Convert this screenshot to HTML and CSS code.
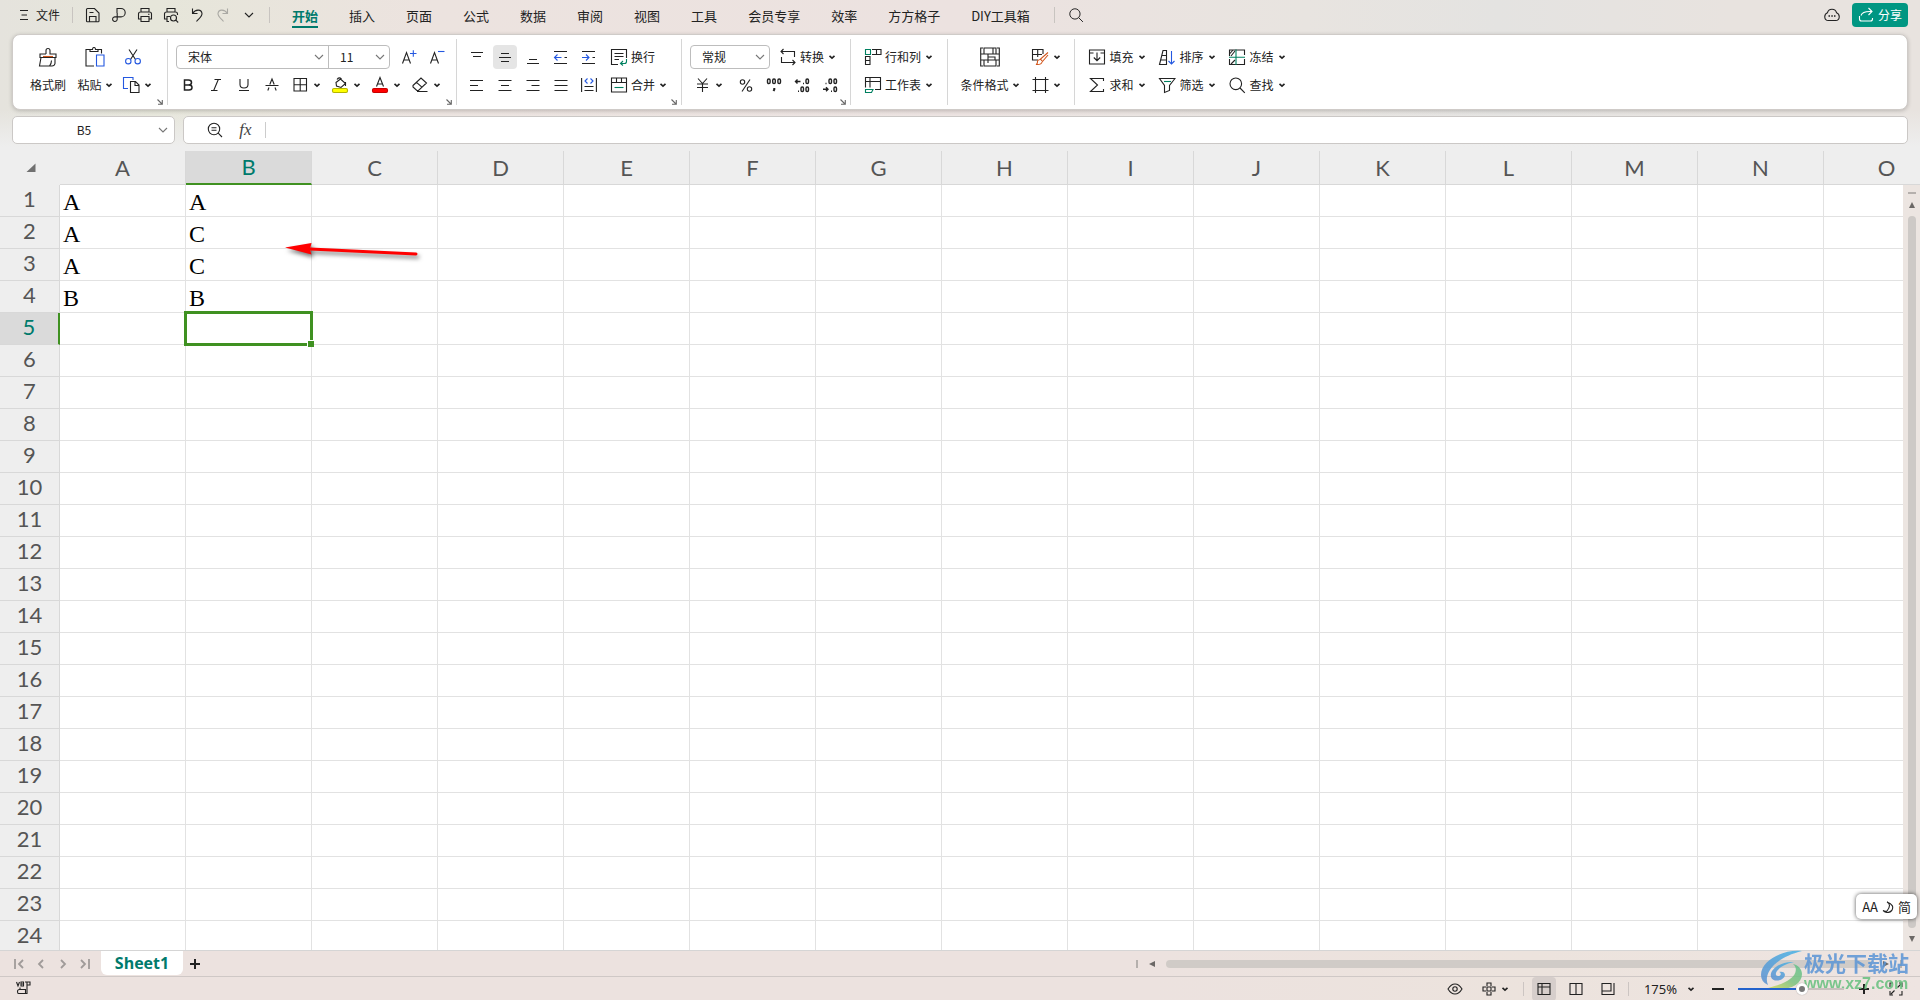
FILE: index.html
```html
<!DOCTYPE html>
<html lang="zh-CN">
<head>
<meta charset="utf-8">
<title>Sheet1</title>
<link rel="stylesheet" href="styles.css">
</head>
<body>
<svg class="sprite" aria-hidden="true">
  <symbol id="chev" viewBox="0 0 8 8"><path d="M1.5 2.8 4 5.2 6.5 2.8" stroke-width="1.6"/></symbol>
  <symbol id="chev-lg" viewBox="0 0 12 12"><path d="M2 4l4 4 4-4"/></symbol>
  <symbol id="launch" viewBox="0 0 6 6"><path d="M.5.5l4.5 4.5M5.3 1v4.3H1"/></symbol>
  <symbol id="search" viewBox="0 0 18 18"><circle cx="7.8" cy="7.8" r="5.8"/><path d="M12 12l4.8 4.8"/></symbol>
</svg>

<header class="titlebar">
  <button class="file-btn"><svg class="i10" viewBox="0 0 10 12"><path d="M1 1.500h8M2.500 6h5.500M1 10.500h8"/></svg>文件</button>
  <span class="bar-sep"></span>
  <div class="quick">
    <button aria-label="保存"><svg class="i16" viewBox="0 0 16 16"><path d="M1.500 14V2.500q0-1 1-1h7l4.500 4.500V14q0 .8-.8.8H2.300q-.8 0-.8-.8zM4.500 14.500V9.500h6.500v5M4.500 5.500h4"/></svg></button>
    <button aria-label="导出"><svg class="i16" viewBox="0 0 16 16"><path d="M6 6V1.500h4a4.200 4.200 0 0 1 0 8.400H4.200a2.300 2.300 0 1 0 2 2.300V6"/></svg></button>
    <button aria-label="打印"><svg class="i16" viewBox="0 0 16 16"><path d="M4 5V1.500h8V5M4 12H1.500V7q0-2 2-2h9q2 0 2 2v5H12M4 9.500h8v5H4zM11 7.300h1.500"/></svg></button>
    <button aria-label="打印预览"><svg class="i16" viewBox="0 0 16 16"><path d="M4 5V1.500h8V5M4 12H1.500V7q0-2 2-2h9q2 0 2 2v1M6 14.500H4v-5h3"/><circle cx="10.500" cy="11" r="3"/><path d="M12.800 13.200l2.400 2.300"/></svg></button>
    <button aria-label="撤销"><svg class="i16" viewBox="0 0 16 16"><path d="M3.500 1.500v5h5M3.800 6.200C6 2.500 12.500 1.500 13 6.500c.2 3-3 5-5.500 8"/></svg></button>
    <button class="dim" aria-label="恢复"><svg class="i16" viewBox="0 0 16 16"><path d="M12.500 1.500v5h-5M12.200 6.200C10 2.500 3.500 1.500 3 6.500c-.2 3 3 5 5.500 8"/></svg></button>
    <button aria-label="更多"><svg class="i12" viewBox="0 0 12 12"><path d="M2 4l4 4 4-4"/></svg></button>
  </div>
  <span class="bar-sep"></span>
  <nav class="tabs">
    <a href="#" class="on">开始</a><a href="#">插入</a><a href="#">页面</a><a href="#">公式</a><a href="#">数据</a><a href="#">审阅</a><a href="#">视图</a><a href="#">工具</a><a href="#">会员专享</a><a href="#">效率</a><a href="#">方方格子</a><a href="#">DIY工具箱</a>
  </nav>
  <span class="bar-sep"></span>
  <button class="find" aria-label="搜索"><svg class="i16"><use href="#search"/></svg></button>
  <div class="account">
    <button aria-label="云"><svg class="i16" viewBox="0 0 16 16"><path d="M3.500 5.700C4.500 1 11.500 1 12.500 5.700c4 1.600 3.500 7.800-.8 7.800H4.300C0 13.500-.5 7.300 3.500 5.700z"/><path d="M4.500 9h1.500M7.300 9h1.500M10 9h1.500" stroke-width="1.600"/></svg></button>
    <button class="share"><svg class="i16" viewBox="0 0 16 16"><path d="M1.500 9v3q0 2 2 2h9q2 0 2-2v-1M3 8.500C4 5 8 4.200 13.500 4.500M10.500 1l3.500 3.500L10.500 8"/></svg>分享</button>
  </div>
</header>

<section class="ribbon" aria-label="开始">
  <div class="group g-clipboard">
    <div class="group-body lead">
      <button class="big w46"><svg class="i20" viewBox="0 0 20 20"><path d="M8 7V3.500a2 2 0 0 1 4 0V7h6v3.500H2V7h6M3 10.500 1.500 19H14q2.500 0 3-2.500v-6M13.500 13.500q0 3-2 5.500"/><path class="orange" d="M5 9.500h10"/></svg><span>格式刷</span></button>
      <button class="big w48"><svg class="i20" viewBox="0 0 20 20"><path d="M4.500 2.500H1v16.500h8M13 2.500h3.500v4M5 4.500V2.500h2.500q0-2 1.500-2t1.500 2H13v2z"/><path d="M11.500 19V8h7.500v11z" class="blue"/></svg><span>粘贴<svg class="chev"><use href="#chev"/></svg></span></button>
      <div class="rows">
        <div class="row"><button class="cell" aria-label="剪切"><svg class="i16" viewBox="0 0 16 16"><path d="M4 .5l6.500 10M12 .5l-6.500 10"/><g class="blue"><circle cx="3.300" cy="12.200" r="2.700"/><circle cx="12.700" cy="12.200" r="2.700"/></g></svg></button></div>
        <div class="row"><button class="split w36" aria-label="复制"><svg class="i18" viewBox="0 0 18 18"><path class="blue" d="M6 12.500H1.500v-11H11V4"/><path d="M8.500 5.500h5l3.500 3.500v7.500H8.500zM13 5.500V9.500h4"/></svg><svg class="chev"><use href="#chev"/></svg></button></div>
      </div>
    </div>
    <button class="launcher" aria-label="剪贴板设置"><svg><use href="#launch"/></svg></button>
  </div>

  <div class="group g-font">
    <div class="group-body"><div class="rows">
      <div class="row">
        <div class="combo-pair">
          <span class="combo w152"><select aria-label="字体"><option>宋体</option></select><svg class="i12"><use href="#chev-lg"/></svg></span>
          <span class="combo w62"><select aria-label="字号"><option>11</option></select><svg class="i12"><use href="#chev-lg"/></svg></span>
        </div>
        <button class="cell" aria-label="增大字号"><svg class="i16" viewBox="0 0 16 16"><path d="M1.500 14.500 5.500 3.500l4 11M2.800 11h5.400"/><path class="blue" d="M9 4.500h6.500M12.300 1.200v6.500"/></svg></button>
        <button class="cell" aria-label="减小字号"><svg class="i16" viewBox="0 0 16 16"><path d="M1.500 14.500 5.500 3.500l4 11M2.800 11h5.400"/><path class="blue" d="M9 2.500h6.500"/></svg></button>
      </div>
      <div class="row">
        <button class="cell" aria-label="加粗"><svg class="i16" viewBox="0 0 16 16"><path d="M4.500 3h4q3 0 3 2.500T8.500 8h-4zM4.500 8H9q3 0 3 2.500T9 13H4.500z" stroke-width="1.500"/></svg></button>
        <button class="cell" aria-label="倾斜"><svg class="i16" viewBox="0 0 16 16"><path d="M6.500 2.500H13M3 13.500h6.500M10.300 2.500l-4.600 11"/></svg></button>
        <button class="cell" aria-label="下划线"><svg class="i16" viewBox="0 0 16 16"><path d="M4 2v5.500q0 3.500 4 3.500t4-3.500V2M3 13.500h10"/></svg></button>
        <button class="cell" aria-label="删除线"><svg class="i16" viewBox="0 0 16 16"><path d="M1.500 8.500h13M5.800 7.500 8 2l2.200 5.500M5 10.500l-1.200 3M11 10.500l1.200 3"/></svg></button>
        <button class="split" aria-label="边框"><svg class="i18" viewBox="0 0 18 18"><path d="M3 2.500h12.500v12.500H3zM3 8.700h12.500M9.200 2.500v12.500"/></svg><svg class="chev"><use href="#chev"/></svg></button>
        <button class="split" aria-label="填充颜色"><svg class="i18" viewBox="0 0 18 18"><path d="M5 6.500 9.500 3l5 4.500-4.500 4-4.500-1.500zM6 3.500Q8 .5 10.500 3M14.500 6v4"/><rect x="1.500" y="12.500" width="15" height="4" rx="1.500" fill="#ff0" stroke="#b5b500"/></svg><svg class="chev"><use href="#chev"/></svg></button>
        <button class="split" aria-label="字体颜色"><svg class="i18" viewBox="0 0 18 18"><path d="M5.500 10.500 9 1.500l3.500 9M6.500 8h5"/><rect x="1.500" y="12.500" width="15" height="4" rx="1.500" fill="red" stroke="#c80000"/></svg><svg class="chev"><use href="#chev"/></svg></button>
        <button class="split" aria-label="清除"><svg class="i18" viewBox="0 0 18 18"><path d="M2 9.500 10 2l5.500 5-8 7.500H5.800L2 11zM5.500 6.300l5.700 5M6 15.500h10.500"/></svg><svg class="chev"><use href="#chev"/></svg></button>
      </div>
    </div></div>
    <button class="launcher" aria-label="字体设置"><svg><use href="#launch"/></svg></button>
  </div>

  <div class="group g-align">
    <div class="group-body"><div class="rows">
      <div class="row">
        <button class="cell" aria-label="顶端对齐"><svg class="i16" viewBox="0 0 16 16"><path d="M2 3.500h12M4 7.500h8"/></svg></button>
        <button class="cell on" aria-label="垂直居中"><svg class="i16" viewBox="0 0 16 16"><path d="M4 4.500h8M2 8.500h12M4 12.500h8"/></svg></button>
        <button class="cell" aria-label="底端对齐"><svg class="i16" viewBox="0 0 16 16"><path d="M4 10.500h8M2 14.500h12"/></svg></button>
        <button class="cell" aria-label="减少缩进"><svg class="i16" viewBox="0 0 16 16"><path d="M1 2.500h13M1 14.500h13M11.500 8.500H14"/><path class="blue" d="M8.500 8.500H2M4.500 5.500l-3 3 3 3"/></svg></button>
        <button class="cell" aria-label="增加缩进"><svg class="i16" viewBox="0 0 16 16"><path d="M1 2.500h13M1 14.500h13M11.500 8.500H14"/><path class="blue" d="M1 8.500h6.500M5 5.500l3 3-3 3"/></svg></button>
        <button class="tool"><svg class="i18" viewBox="0 0 18 18"><path d="M8 16.500H1.500v-15h15V10M4.500 5.500h9M4.500 8.500h9M4.500 11.500H9"/><path class="green" d="M16.500 11v2.500q0 2-2 2H11M13 13l-2.500 2.500L13 17.500"/></svg>换行</button>
      </div>
      <div class="row">
        <button class="cell" aria-label="左对齐"><svg class="i16" viewBox="0 0 16 16"><path d="M1 3.500h13M1 8.500h8M1 13.500h13"/></svg></button>
        <button class="cell" aria-label="水平居中"><svg class="i16" viewBox="0 0 16 16"><path d="M1.500 3.500h13M4 8.500h8M1.500 13.500h13"/></svg></button>
        <button class="cell" aria-label="右对齐"><svg class="i16" viewBox="0 0 16 16"><path d="M1.500 3.500h13M6.500 8.500h8M1.500 13.500h13"/></svg></button>
        <button class="cell" aria-label="两端对齐"><svg class="i16" viewBox="0 0 16 16"><path d="M1.500 3.500h13M1.500 8.500h13M1.500 13.500h13"/></svg></button>
        <button class="cell" aria-label="分散对齐"><svg class="i16" viewBox="0 0 16 16"><path d="M.6 1v14M15.400 1v14M3.500 9.500h9M3.500 13.500h9"/><path class="blue" d="M6.500 1.500 4 4l2.500 2.500M9.500 1.500 12 4 9.500 6.500"/></svg></button>
        <button class="tool"><svg class="i18" viewBox="0 0 18 18"><path d="M1.500 2h15v14h-15zM1.500 6.500h15M6.500 2v4.500M11.500 2v4.500"/><path class="green" d="M4.500 11.500h9"/></svg>合并<svg class="chev"><use href="#chev"/></svg></button>
      </div>
    </div></div>
    <button class="launcher" aria-label="对齐设置"><svg><use href="#launch"/></svg></button>
  </div>

  <div class="group g-number">
    <div class="group-body"><div class="rows">
      <div class="row">
        <div class="combo-pair"><span class="combo w80"><select aria-label="数字格式"><option>常规</option></select><svg class="i12"><use href="#chev-lg"/></svg></span></div>
        <button class="tool flush"><svg class="i18" viewBox="0 0 18 18"><path d="M2.500 9v5.500H16M4.500 1 2 3.500 4.500 6M2 3.500h13.500V9M13.500 12l2.500 2.500-2.500 2.500"/></svg>转换<svg class="chev"><use href="#chev"/></svg></button>
      </div>
      <div class="row">
        <button class="split" aria-label="货币"><svg class="i18" viewBox="0 0 18 18"><path d="M5 2.500 9.500 7.500 14 2.500M9.500 7.500v8.500M4 8h11M4 11.500h11"/></svg><svg class="chev"><use href="#chev"/></svg></button>
        <span class="spacer"></span>
        <button class="cell" aria-label="百分比"><svg class="i16" viewBox="0 0 16 16"><circle cx="4.500" cy="5" r="2.200"/><circle cx="11.500" cy="12" r="2.200"/><path d="M12 2.500 4 14.500"/></svg></button>
        <button class="cell" aria-label="千位分隔"><svg class="i16" viewBox="0 0 16 16"><g stroke-width="1.400"><rect x="1.500" y="2" width="2.600" height="4.500" rx="1.200"/><rect x="6.700" y="2" width="2.600" height="4.500" rx="1.200"/><rect x="11.900" y="2" width="2.600" height="4.500" rx="1.200"/><path d="M8.300 11v1.500L7.500 14" stroke-width="2"/></g></svg></button>
        <button class="cell" aria-label="增加小数位"><svg class="i16" viewBox="0 0 16 16"><g stroke-width="1.400"><path d="M6.500 4.500h-5M3.500 2.500l-2 2 2 2M9 6.500h1M4 14.200h1"/><rect x="12" y="2" width="2.500" height="4.500" rx="1.200"/><rect x="7" y="10" width="2.500" height="4.500" rx="1.200"/><rect x="12" y="10" width="2.500" height="4.500" rx="1.200"/></g></svg></button>
        <button class="cell" aria-label="减少小数位"><svg class="i16" viewBox="0 0 16 16"><g stroke-width="1.400"><path d="M1 12.200h5M4 10.200l2 2-2 2M3.500 6.500h1M9 14.200h1"/><rect x="7" y="2" width="2.500" height="4.500" rx="1.200"/><rect x="12" y="2" width="2.500" height="4.500" rx="1.200"/><rect x="12" y="10" width="2.500" height="4.500" rx="1.200"/></g></svg></button>
      </div>
    </div></div>
    <button class="launcher" aria-label="数字设置"><svg><use href="#launch"/></svg></button>
  </div>

  <div class="group g-cells">
    <div class="group-body"><div class="rows">
      <div class="row"><button class="tool"><svg class="i18" viewBox="0 0 18 18"><path d="M8 1.500h9v5H8M12.500 1.500v5M1.500 8.500h4.500v8H1.500zM1.500 12.500H6"/><path class="green" d="M1.500 1.500h5v5h-5z"/></svg>行和列<svg class="chev"><use href="#chev"/></svg></button></div>
      <div class="row"><button class="tool"><svg class="i18" viewBox="0 0 18 18"><path d="M1.500 11.500V1.500h15v12H11M1.500 5.500h15M6 1.500v10"/><path class="green" d="M1.500 13.500H9l-1.500 3h-6z"/></svg>工作表<svg class="chev"><use href="#chev"/></svg></button></div>
    </div></div>
  </div>

  <div class="group g-style">
    <div class="group-body">
      <button class="big w72"><svg class="i20" viewBox="0 0 20 20"><path d="M3 1H.7v18H3M17 1h2.300v18H17M4 1h12v6H4zM.7 7h18.600M.7 13h18.600M4 13v6h12v-6M8 7v6M13 1v6M8 10h7v3M8 16V13"/></svg><span>条件格式<svg class="chev"><use href="#chev"/></svg></span></button>
      <div class="rows">
        <div class="row"><button class="split" aria-label="表格样式"><svg class="i18" viewBox="0 0 18 18"><path d="M7 12H1.500V1.500H12V6M1.500 6.500H11M6.700 1.500V9"/><path class="orange" d="M17 4.500 9.500 11l2 2.500L17 7M9.300 11.500Q6 12 6.500 14q0 2-1.500 2.500 5.500.5 6-2.500"/></svg><svg class="chev"><use href="#chev"/></svg></button></div>
        <div class="row"><button class="split" aria-label="单元格"><svg class="i18" viewBox="0 0 18 18"><path d="M4.500 1v16M14.500 1v16M1.500 3.500h16M1.500 14.500h16"/></svg><svg class="chev"><use href="#chev"/></svg></button></div>
      </div>
    </div>
  </div>

  <div class="group last">
    <div class="group-body"><div class="rows">
      <div class="row">
        <button class="tool w70"><svg class="i18" viewBox="0 0 18 18"><path d="M1.500 5V2h15v3M1.500 5v11h15V5M1.500 5h4M12.500 5h4M9 4.500v8M5.800 9.500 9 12.700l3.200-3.200"/></svg>填充<svg class="chev"><use href="#chev"/></svg></button>
        <button class="tool w70"><svg class="i18" viewBox="0 0 18 18"><path d="M1.500 16.500 5 2.500h3.500v14zM4 7.500h4.500M2.700 12h5.800"/><path class="blue" d="M13.500 3v13M10.500 13l3 3 3-3"/></svg>排序<svg class="chev"><use href="#chev"/></svg></button>
        <button class="tool w70"><svg class="i18" viewBox="0 0 18 18"><path d="M1.500 8V2h15v5M1.500 11v5.500h15V11M5 2l-3 3.500M7 3 3 8M7 12l-4 4M12 2h4.500"/><path class="green" d="M8 1.500v15.500M1 9.300h16"/></svg>冻结<svg class="chev"><use href="#chev"/></svg></button>
      </div>
      <div class="row">
        <button class="tool w70"><svg class="i18" viewBox="0 0 18 18"><path d="M15.500 5V2.500H2.500L9.500 9l-7 6.500h13V13"/></svg>求和<svg class="chev"><use href="#chev"/></svg></button>
        <button class="tool w70"><svg class="i18" viewBox="0 0 18 18"><path d="M1.500 2.500h15.500L11.500 9.500v5l-5 2v-7z"/><path class="green" d="M6 5.500h7"/></svg>筛选<svg class="chev"><use href="#chev"/></svg></button>
        <button class="tool w70"><svg class="i18"><use href="#search"/></svg>查找<svg class="chev"><use href="#chev"/></svg></button>
      </div>
    </div></div>
  </div>
</section>

<div class="formula-row">
  <div class="namebox"><input aria-label="名称框" value="B5"><svg class="i12"><use href="#chev-lg"/></svg></div>
  <div class="formula">
    <button aria-label="缩放"><svg class="i16" viewBox="0 0 16 16"><circle cx="7" cy="7" r="5.700"/><path d="M4.500 5.700h5M4.500 8.300h5M11.200 11.200l3.800 3.800"/></svg></button>
    <button class="fx" aria-label="插入函数"><i>fx</i></button>
    <span class="fsep"></span>
    <input aria-label="编辑栏" value="">
  </div>
</div>

<main class="sheet">
  <div class="viewport">
    <table>
      <thead><tr id="heads"><th class="corner"><svg viewBox="0 0 10 10"><path d="M9.500.5v8.500h-9z"/></svg></th></tr></thead>
      <tbody id="cells"></tbody>
    </table>
    <svg class="arrow" viewBox="0 0 142 22"><path d="M25 8 131 13" stroke="red" stroke-width="3" stroke-linecap="round"/><path d="M0 6.500 26.500 2 25 8.500l1.500 5z" fill="red" stroke="none"/></svg>
  </div>
  <div class="vscroll"><i class="dash"></i><svg class="i6" viewBox="0 0 6 6"><path d="M3 0l3 6H0z"/></svg><span class="thumb"></span><svg class="i6" viewBox="0 0 6 6"><path d="M0 0h6L3 6z"/></svg></div>
</main>

<div class="sheetbar">
  <div class="pager">
    <button aria-label="第一个"><svg viewBox="0 0 10 12"><path d="M1 1v10M9 2 5 6l4 4"/></svg></button>
    <button aria-label="上一个"><svg viewBox="0 0 10 12"><path d="M7 2 3 6l4 4"/></svg></button>
    <button aria-label="下一个"><svg viewBox="0 0 10 12"><path d="M3 2l4 4-4 4"/></svg></button>
    <button aria-label="最后一个"><svg viewBox="0 0 10 12"><path d="M1 2l4 4-4 4M9 1v10"/></svg></button>
  </div>
  <button class="sheet-tab">Sheet1</button>
  <button class="add" aria-label="新建工作表"><svg viewBox="0 0 10 10"><path d="M0 5h10M5 0v10"/></svg></button>
  <div class="hscroll"><i class="split-mark"></i><svg class="i6" viewBox="0 0 6 6"><path d="M6 0v6L0 3z"/></svg><span class="thumb"></span><svg class="i6" viewBox="0 0 6 6"><path d="M0 0v6l6-3z"/></svg><i class="split-mark"></i></div>
</div>

<footer class="status">
  <svg class="macro" viewBox="0 0 16 14"><path d="M.5 1l1.500 4L3.500 1M5 1v4h2.500V1zM5 3h2.500M9 1h5v3h-3M11 1v11.500H2.500q-1 0-1-2t2-2h6v4M4 8V6.500"/></svg>
  <div class="status-tools">
    <button class="s-eye" aria-label="护眼模式"><svg class="i16" viewBox="0 0 16 16"><path d="M1 8q3-5 7-5t7 5q-3 5-7 5T1 8z"/><circle cx="8" cy="8" r="2.200"/></svg></button>
    <button class="s-split" aria-label="阅读模式"><svg class="i14" viewBox="0 0 14 14"><path d="M5 4V1h4v3M5 10v3h4v-3M4 5H1v4h3M10 5h3v4h-3M5 5h4v4H5z"/></svg><svg class="chev"><use href="#chev"/></svg></button>
    <span class="ssep"></span>
    <button class="view on" aria-label="普通视图"><svg class="i14" viewBox="0 0 14 14"><path d="M1 1.500h12v11H1zM1 5h12M5 1.500v11"/></svg></button>
    <button class="view" aria-label="页面布局"><svg class="i14" viewBox="0 0 14 14"><path d="M1 1.500h12v11H1zM7 1.500v11"/></svg></button>
    <button class="view" aria-label="分页预览"><svg class="i14" viewBox="0 0 14 14"><path d="M1 1.500h9v7.500H1zM13 1v11.500H1V9"/></svg></button>
    <span class="ssep"></span>
    <button class="zoom">175%<svg class="chev"><use href="#chev"/></svg></button>
    <button class="step" aria-label="缩小"><svg viewBox="0 0 12 12"><path d="M0 6h12"/></svg></button>
    <input type="range" aria-label="显示比例" min="0" max="100" value="62">
    <button class="step" aria-label="放大"><svg viewBox="0 0 12 12"><path d="M1 6h10M6 1v10"/></svg></button>
    <button class="full" aria-label="全屏"><svg class="i14" viewBox="0 0 14 14"><path d="M1 5V1h3M10 1h3v4M13 9v4h-3M4 13H1V9M8.500 5.500 12 2M5.500 8.500 2 12"/></svg></button>
  </div>
</footer>

<div class="ime"><span>AA</span><svg class="i12" viewBox="0 0 12 12"><path d="M5 1q5 2.500 0 9-2 1-4-.5 5 4 8.800 0Q13 4 5 1z"/></svg><span>简</span></div>
<div class="watermark">
  <svg viewBox="0 0 44 42">
    <defs>
      <linearGradient id="g1" x1="0" y1="1" x2="1" y2="0"><stop offset="0" stop-color="#5b8fd0"/><stop offset="1" stop-color="#45b3e6"/></linearGradient>
      <linearGradient id="g2" x1="0" y1="1" x2="1" y2="0"><stop offset="0" stop-color="#d6dc5a"/><stop offset=".5" stop-color="#7cc27e"/><stop offset="1" stop-color="#5fc08c"/></linearGradient>
    </defs>
    <path fill="url(#g1)" stroke="none" d="M42 1C24-1 1 10 1 25q0 7 7 10C3 24 14 8 42 1z"/>
    <path fill="url(#g1)" stroke="none" d="M34 12C20 11 9 20 11 27c2 6 13 4 14-2 0-3-3-4-6-3 3 1 2 4-1 4-5 0-2-10 16-14z"/>
    <path fill="url(#g2)" stroke="none" d="M33 14c5 4 3 11-3 15-5 4-11 6-22 9 20 4 34-3 34-14 0-5-4-9-9-10z"/>
  </svg>
  <div><b>极光下载站</b><span>www.xz7.com</span></div>
</div>
<script src="app.js"></script>
</body>
</html>
```
FILE: app.js
```js
const columns = 'ABCDEFGHIJKLMNO'.split('');
const rowCount = 24;
const values = { A1: 'A', B1: 'A', A2: 'A', B2: 'C', A3: 'A', B3: 'C', A4: 'B', B4: 'B' };
const active = { column: 'B', row: 5 };

const heads = document.getElementById('heads');
for (const name of columns) {
  const th = document.createElement('th');
  th.scope = 'col';
  th.textContent = name;
  if (name === active.column) th.className = 'on';
  heads.append(th);
}

const body = document.getElementById('cells');
for (let row = 1; row <= rowCount; row++) {
  const tr = document.createElement('tr');
  const th = document.createElement('th');
  th.scope = 'row';
  th.textContent = row;
  if (row === active.row) th.className = 'on';
  tr.append(th);
  for (const name of columns) {
    const td = document.createElement('td');
    td.textContent = values[name + row] || '';
    if (name === active.column && row === active.row) td.className = 'active';
    tr.append(td);
  }
  body.append(tr);
}
```
FILE: styles.css
```css
* { box-sizing: border-box; }
body {
  margin: 0;
  height: 100vh;
  display: flex;
  flex-direction: column;
  overflow: hidden;
  font: 12px/16px "Noto Sans CJK SC", sans-serif;
  color: #222;
  background: linear-gradient(90deg, #e5e3dd 0, #e6e6da 8%, #ece3df 22%, #ece2e0 50%, #e8e4e0 68%, #e4e3e1 78%, #e8e3df 90%, #e8e3df 100%);
}
button, input, select { font: inherit; color: inherit; background: none; border: 0; padding: 0; margin: 0; }
button { display: flex; align-items: center; justify-content: center; white-space: nowrap; }
svg { fill: none; stroke: currentColor; stroke-width: 1.1; flex: none; }
.sprite { display: none; }
.i6 { width: 6px; height: 6px; fill: #6b6866; stroke: none; }
.i10 { width: 10px; height: 12px; }
.i12 { width: 12px; height: 12px; }
.i14 { width: 14px; height: 14px; }
.i16 { width: 16px; height: 16px; }
.i18 { width: 18px; height: 18px; }
.i20 { width: 20px; height: 20px; }
.chev { width: 8px; height: 8px; }
.blue { stroke: #2458e0; }
.green { stroke: #008060; }
.orange { stroke: #d2561c; }

/* title bar */
.titlebar { display: flex; align-items: center; height: 34px; padding: 0 12px 4px 19px; flex: none; }
.file-btn { gap: 7px; width: 53px; justify-content: flex-start; }
.bar-sep { width: 1px; height: 16px; background: #c8c4c0; }
.quick { display: flex; margin: 0 7px; }
.quick button { width: 26px; height: 24px; }
.quick .dim { color: #aaa9a4; }
.tabs { display: flex; gap: 31px; padding: 0 24px 0 22px; font-size: 13px; line-height: 20px; }
.tabs a { color: inherit; text-decoration: none; padding-top: 3px; border-bottom: 2px solid transparent; white-space: nowrap; }
.tabs .on { color: #007a6c; font-weight: bold; border-color: #007a6c; }
.find { width: 42px; }
.account { margin-left: auto; display: flex; align-items: center; gap: 12px; }
.share { width: 56px; height: 24px; gap: 4px; border-radius: 4px; background: #009682; color: #fff; }

/* ribbon */
.ribbon { display: flex; flex: none; height: 76px; margin: 0 12px; padding: 4px 0; background: #fff; border: 1px solid #cfcbc8; border-radius: 8px; box-shadow: 0 1px 4px #0003; }
.group { display: flex; flex-direction: column; flex: none; height: 66px; padding: 6px 4px 0 6px; border-right: 1px solid #d6d6d6; }
.g-clipboard { width: 155px; }
.g-font { width: 289px; }
.g-align { width: 225px; }
.g-number { width: 169px; }
.g-cells { width: 97px; }
.g-style { width: 127px; }
.group.last { border: 0; }
.group-body { display: flex; }
.group-body.lead { padding-left: 6px; }
.rows { display: flex; flex-direction: column; gap: 4px; }
.row { display: flex; height: 24px; }
.cell { flex: none; width: 28px; height: 24px; border-radius: 4px; }
.cell.on { width: 24px; margin: 0 2px; background: #e5e5e5; }
.split { flex: none; width: 40px; gap: 4px; }
.split.w36 { width: 36px; }
.spacer { width: 4px; }
.tool { flex: none; gap: 4px; padding: 0 5px 0 7px; }
.tool .i18 { margin-right: -1px; }
.tool.flush { padding-left: 9px; }
.w70 { width: 70px; }
.big { flex: none; flex-direction: column; gap: 4px; height: 52px; }
.big .i20 { margin: 2px 0; }
.big span { display: flex; align-items: center; gap: 3px; height: 24px; }
.w46 { width: 46px; }
.w48 { width: 48px; }
.w72 { width: 72px; }
.launcher { align-self: flex-end; margin-top: 2px; width: 6px; height: 6px; color: #666; }
.launcher svg { width: 6px; height: 6px; }
.combo-pair { display: flex; flex: none; margin: 0 5px 0 2px; border: 1px solid #bdbdbd; border-radius: 4px; }
.flush { margin-left: -5px; }
.combo { display: grid; align-items: center; }
.combo + .combo { border-left: 1px solid #bdbdbd; }
.combo > * { grid-area: 1 / 1; }
.combo select { appearance: none; width: 100%; height: 22px; padding-left: 11px; }
.combo svg { justify-self: end; margin-right: 3px; pointer-events: none; color: #777; }
.w152 { width: 151px; }
.w62 { width: 61px; }
.w80 { width: 78px; }

/* formula row */
.formula-row { display: flex; gap: 8px; flex: none; padding: 6px 12px 7px; background: linear-gradient(#eeee0000, #eee 90%); }
.namebox, .formula { display: flex; align-items: center; height: 28px; background: #fff; border: 1px solid #cbc8c6; border-radius: 5px; }
.namebox { width: 163px; padding-right: 5px; color: #222; }
.namebox input { flex: 1; min-width: 0; padding-right: 2px; text-align: center; }
.namebox svg { color: #777; }
.formula { flex: 1; padding-left: 15px; }
.formula button { width: 31px; height: 24px; }
.formula input { flex: 1; }
.formula .fx { font: 17px/20px "Liberation Serif", serif; color: #444; }
.fsep { width: 1px; height: 16px; margin-left: 4px; background: #ccc; }

/* grid */
.sheet { flex: 1; min-height: 0; display: flex; background: #eee; }
.viewport { flex: 1; min-width: 0; overflow: hidden; position: relative; background: #fff; }
table { table-layout: fixed; width: 1950px; border-collapse: separate; border-spacing: 0; }
th, td { height: 32px; padding: 0; border: solid #e2e2e2; border-width: 0 1px 1px 0; }
th { font: 22px/28px Lato, sans-serif; color: #555; background: #eee; border-color: #d8d8d8; }
tbody th { padding-bottom: 3px; }
thead th { width: 126px; height: 34px; }
thead .corner { width: 60px; border-color: #eee; text-align: left; line-height: 0; }
.corner svg { width: 10px; height: 10px; margin-left: 26px; fill: #707070; stroke: none; }
th.on { background: #dadada; color: #007a6c; }
thead .on { border-bottom: 2px solid #3f9121; }
tbody th.on { border-right: 2px solid #3f9121; }
td { font: 24px/28px "Liberation Serif", serif; color: #000; padding: 3px 0 0 3px; }
td.active { position: relative; }
td.active::before { content: ""; position: absolute; inset: -2px -2px -2px -2px; border: 3px solid #3f9121; }
td.active::after { content: ""; position: absolute; right: -3px; bottom: -3px; width: 6px; height: 6px; background: #3f9121; border: solid #fff; border-width: 1px 0 0 1px; }
.arrow { position: absolute; left: 285px; top: 90px; width: 142px; height: 22px; filter: drop-shadow(2px 3px 2px #0008); overflow: visible; }
.vscroll { width: 17px; margin-top: 33px; border-top: 1px solid #d8d8d8; background: #ece5e1; display: flex; flex-direction: column; align-items: center; gap: 8px; padding: 7px 0 8px; }
.dash { width: 8px; height: 2px; background: #b5b0ad; }
.vscroll .thumb { flex: 1; width: 8px; border-radius: 4px; background: #cdc9c6; }

/* sheet tabs */
.sheetbar { display: flex; height: 26px; flex: none; border-top: 1px solid #d5d5d5; background: linear-gradient(90deg, #ece2df, #ece2df 60%, #ece3dd 80%, #eee4e1); }
.pager { display: flex; align-items: center; gap: 12px; padding: 0 11px 0 14px; }
.pager button { color: #a09b99; }
.pager svg { width: 10px; height: 12px; stroke-width: 1.8; }
.sheet-tab { width: 82px; height: 24px; background: #fff; border-radius: 0 0 6px 6px; color: #007a6c; font: bold 16px/22px "Open Sans", sans-serif; }
.add { margin-left: 7px; }
.add svg { width: 10px; height: 10px; stroke-width: 2; }
.hscroll { flex: none; width: 784px; margin-left: auto; display: flex; align-items: center; gap: 11px; padding-right: 18px; }
.split-mark { width: 2px; height: 8px; background: #b5b0ad; }
.hscroll .thumb { flex: 1; height: 8px; border-radius: 4px; background: #d0cbc7; }

/* status bar */
.status { display: flex; justify-content: space-between; height: 24px; flex: none; border-top: 1px solid #cfc8c6; background: linear-gradient(90deg, #ece2df, #ece2df 60%, #ece3dd 80%, #eee4e1); }
.macro { width: 16px; height: 14px; margin: 4px 0 0 16px; }
.status-tools { display: flex; align-items: center; padding-right: 17px; }
.s-eye { width: 16px; margin-right: 19px; }
.s-split { gap: 5px; margin-right: 14px; }
.ssep { width: 1px; height: 14px; background: #ccc5c2; }
.view { width: 24px; height: 24px; margin-right: 8px; border-radius: 4px; }
.view.on { margin-left: 8px; background: #d6cecb; }
.zoom { gap: 10px; margin: 0 17px 0 15px; font: 13px/16px "Noto Sans", sans-serif; }
.step svg { width: 12px; height: 12px; stroke-width: 2; }
.status input { appearance: none; position: relative; z-index: 1; width: 106px; height: 12px; margin: 0 14px; background: linear-gradient(90deg, #2462cc 60%, #c8c0bd 60%) center / 100% 2px no-repeat; }
.status input::-webkit-slider-thumb { appearance: none; width: 12px; height: 12px; border-radius: 50%; border: 3px solid #fff; background: #777; box-shadow: 0 0 1px #0006; }
.full { margin-left: 19px; }

/* floating overlays */
.ime { position: absolute; right: 3px; bottom: 81px; display: flex; align-items: center; gap: 4px; height: 25px; padding: 0 6px; background: #fff; border-radius: 5px; box-shadow: 0 0 4px #000a; }
.ime span { font-size: 13px; }
.watermark { position: absolute; right: 11px; bottom: 6px; display: flex; opacity: .85; pointer-events: none; }
.watermark svg { width: 44px; height: 42px; }
.watermark div { display: flex; flex-direction: column; }
.watermark b { font-size: 21px; line-height: 24px; color: #5b95d6; }
.watermark span { font: bold 16px/20px "Liberation Sans", sans-serif; color: #66c07e; }
```
